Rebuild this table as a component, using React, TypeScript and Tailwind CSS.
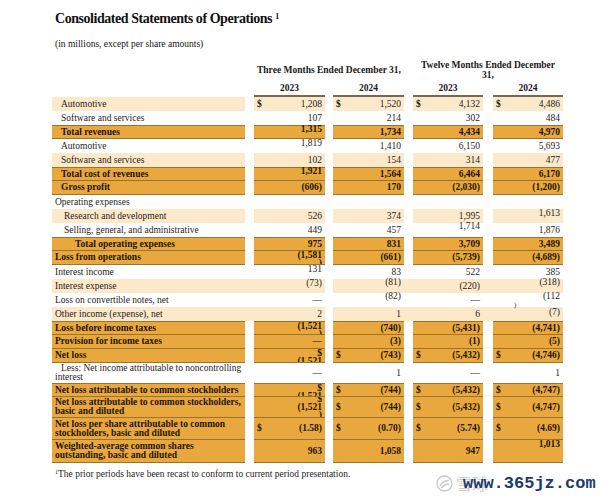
import React from "react";

type Cell = { t?: string; d?: boolean; c?: string; node?: React.ReactNode };
type Row = {
  label: React.ReactNode;
  lp: string;
  bg: "l" | "d" | "n";
  h: string;
  cells: Cell[];
  join?: boolean[];
  top?: boolean;
};

const serif = { fontFamily: '"Liberation Serif", "Times New Roman", serif' };

const Clip = ({ lines, lh, align }: { lines: string[]; lh: string; align: string }) => (
  <div className={`flex h-full w-full flex-col items-end overflow-hidden ${align} ${lh}`}>
    {lines.map((l, i) => (
      <span key={i} className="block shrink-0">
        {l}
      </span>
    ))}
  </div>
);

const rows: Row[] = [
  { label: "Automotive", lp: "pl-[9px]", bg: "l", h: "h-[14px]", cells: [{ d: true, t: "1,208" }, { d: true, t: "1,520" }, { d: true, t: "4,132" }, { d: true, t: "4,486" }] },
  { label: "Software and services", lp: "pl-[9px]", bg: "n", h: "h-[14px]", cells: [{ t: "107" }, { t: "214" }, { t: "302" }, { t: "484" }] },
  { label: "Total revenues", lp: "pl-[9px]", bg: "d", top: true, h: "h-[14px]", cells: [{ t: "1,315", c: "-translate-y-[3px]" }, { t: "1,734" }, { t: "4,434" }, { t: "4,970" }] },
  { label: "Automotive", lp: "pl-[9px]", bg: "n", h: "h-[14px]", cells: [{ t: "1,819", c: "-translate-y-[3px]" }, { t: "1,410" }, { t: "6,150" }, { t: "5,693" }] },
  { label: "Software and services", lp: "pl-[9px]", bg: "l", h: "h-[14px]", cells: [{ t: "102" }, { t: "154" }, { t: "314" }, { t: "477" }] },
  { label: "Total cost of revenues", lp: "pl-[9px]", bg: "d", top: true, h: "h-[14px]", cells: [{ t: "1,921", c: "-translate-y-[3px]" }, { t: "1,564" }, { t: "6,464" }, { t: "6,170" }] },
  { label: "Gross profit", lp: "pl-[9px]", bg: "d", h: "h-[14px]", cells: [{ t: "(606)" }, { t: "170" }, { t: "(2,030)" }, { t: "(1,200)" }] },
  { label: "Operating expenses", lp: "pl-[3px]", bg: "n", h: "h-[14px]", cells: [{}, {}, {}, {}] },
  { label: "Research and development", lp: "pl-[12px]", bg: "l", h: "h-[14px]", cells: [{ t: "526" }, { t: "374" }, { t: "1,995" }, { t: "1,613", c: "-translate-y-[3px]" }] },
  { label: "Selling, general, and administrative", lp: "pl-[12px]", bg: "n", h: "h-[14px]", cells: [{ t: "449" }, { t: "457" }, { t: "1,714", c: "-translate-y-[4px]" }, { t: "1,876" }] },
  { label: "Total operating expenses", lp: "pl-[23px]", bg: "d", top: true, h: "h-[14px]", cells: [{ t: "975" }, { t: "831" }, { t: "3,709" }, { t: "3,489" }] },
  { label: "Loss from operations", lp: "pl-[3px]", bg: "d", h: "h-[14px]", cells: [{ node: <Clip lines={["(1,581", ")"]} lh="leading-[8px]" align="justify-start pt-[0px]" /> }, { t: "(661)" }, { t: "(5,739)" }, { t: "(4,689)" }] },
  { label: "Interest income", lp: "pl-[3px]", bg: "n", h: "h-[14px]", cells: [{ t: "131", c: "-translate-y-[3px]" }, { t: "83" }, { t: "522" }, { t: "385" }] },
  { label: "Interest expense", lp: "pl-[3px]", bg: "l", h: "h-[14px]", join: [true, false, true, true], cells: [{ t: "(73)", c: "-translate-y-[3px]" }, { t: "(81)", c: "-translate-y-[4px]" }, { t: "(220)" }, { t: "(318)", c: "-translate-y-[4px]" }] },
  {
    label: "Loss on convertible notes, net", lp: "pl-[3px]", bg: "n", h: "h-[14px]",
    cells: [
      { t: "—" },
      { t: "(82)", c: "-translate-y-[4px]" },
      { t: "—" },
      {
        node: (
          <div className="relative h-full w-full">
            <span className="absolute right-0 top-[-2px]">(112</span>
            <span className="absolute left-[21px] top-[7px] text-[7px]">)</span>
          </div>
        ),
      },
    ],
  },
  { label: "Other income (expense), net", lp: "pl-[3px]", bg: "l", h: "h-[14px]", join: [true, false, true, true], cells: [{ t: "2" }, { t: "1" }, { t: "6" }, { t: "(7)", c: "-translate-y-[2px]" }] },
  { label: "Loss before income taxes", lp: "pl-[3px]", bg: "d", top: true, h: "h-[14px]", cells: [{ node: <Clip lines={["(1,521", ")"]} lh="leading-[8px]" align="justify-start pt-[0px]" /> }, { t: "(740)" }, { t: "(5,431)" }, { t: "(4,741)" }] },
  { label: "Provision for income taxes", lp: "pl-[3px]", bg: "d", h: "h-[14px]", cells: [{ t: "—" }, { t: "(3)" }, { t: "(1)" }, { t: "(5)" }] },
  { label: "Net loss", lp: "pl-[3px]", bg: "d", h: "h-[14px]", cells: [{ node: <Clip lines={["$", "(1,521"]} lh="leading-[8px]" align="justify-start" /> }, { d: true, t: "(743)" }, { d: true, t: "(5,432)" }, { d: true, t: "(4,746)" }] },
  {
    label: (
      <span className="block leading-[9px]">
        <span className="pl-[6px]">Less: Net income attributable to noncontrolling</span>
        <br />
        interest
      </span>
    ),
    lp: "pl-[3px]", bg: "n", h: "h-[20px]",
    cells: [{ t: "—" }, { t: "1" }, { t: "—" }, { t: "1" }],
  },
  { label: "Net loss attributable to common stockholders", lp: "pl-[3px]", bg: "d", top: true, h: "h-[14px]", cells: [{ node: <Clip lines={["$", "(1,521"]} lh="leading-[8px]" align="justify-start" /> }, { d: true, t: "(744)" }, { d: true, t: "(5,432)" }, { d: true, t: "(4,747)" }] },
  {
    label: (
      <span className="block leading-[9px]">
        Net loss attributable to common stockholders,
        <br />
        basic and diluted
      </span>
    ),
    lp: "pl-[3px]", bg: "d", h: "h-[21px]",
    cells: [{ node: <Clip lines={["$", "(1,521", ")"]} lh="leading-[8px]" align="justify-center" /> }, { d: true, t: "(744)" }, { d: true, t: "(5,432)" }, { d: true, t: "(4,747)" }],
  },
  {
    label: (
      <span className="block leading-[8.5px]">
        Net loss per share attributable to common
        <br />
        stockholders, basic and diluted
      </span>
    ),
    lp: "pl-[3px]", bg: "d", h: "h-[22px]",
    cells: [{ d: true, t: "(1.58)" }, { d: true, t: "(0.70)" }, { d: true, t: "(5.74)" }, { d: true, t: "(4.69)" }],
  },
  {
    label: (
      <span className="block leading-[9px]">
        Weighted-average common shares
        <br />
        outstanding, basic and diluted
      </span>
    ),
    lp: "pl-[3px]", bg: "d", h: "h-[23px]",
    cells: [{ t: "963" }, { t: "1,058" }, { t: "947" }, { t: "1,013", c: "-translate-y-[7px]" }],
  },
];

function bgClass(bg: "l" | "d" | "n", top?: boolean) {
  if (bg === "l") return "bg-[#FCE9C9]";
  if (bg === "d")
    return top
      ? "bg-[#E8A83E] border-y border-[#9A7331]"
      : "bg-[#E8A83E] border-b border-[#9A7331]";
  return "";
}

function TableRow({ r }: { r: Row }) {
  const bold = r.bg === "d";
  const cellBg = bgClass(r.bg, r.top);
  const join = r.join ?? [false, false, false, false];
  const spacerW = ["w-[9px]", "w-[8px]", "w-[9px]", "w-[10px]"];
  const colW = ["w-[71px]", "w-[71px]", "w-[70px]", "w-[70px]"];
  const parts: React.ReactNode[] = [];
  parts.push(
    <div key="lab" className={`box-border flex w-[193px] shrink-0 items-center ${r.lp} ${cellBg} ${bold ? "font-bold text-[#1f1505]" : "text-[#1e1e1e]"}`}>
      {r.label}
    </div>
  );
  r.cells.forEach((c, i) => {
    parts.push(
      <div key={`s${i}`} className={`box-border shrink-0 ${spacerW[i]} ${join[i] ? cellBg : ""}`} />
    );
    parts.push(
      <div key={`c${i}`} className={`box-border shrink-0 ${colW[i]} ${cellBg} ${bold ? "font-bold text-[#1f1505]" : "text-[#1e1e1e]"}`}>
        {c.node ? (
          <div className="h-full w-full pr-[3px]">{c.node}</div>
        ) : (
          <div className="flex h-full items-center justify-between px-[3px]">
            <span className="font-bold">{c.d ? "$" : ""}</span>
            <span className={c.c ?? ""}>{c.t ?? ""}</span>
          </div>
        )}
      </div>
    );
  });
  return <div className={`flex ${r.h} text-[9.5px] leading-[11px]`}>{parts}</div>;
}

export default function App() {
  return (
    <div className="relative h-[500px] w-[601px] overflow-hidden bg-white text-[#1a1a1a]" style={serif}>
      <div className="pl-[55px] pt-[11px]">
        <div className="h-[16px] text-[14px] font-bold leading-[16px] tracking-[-0.45px] text-[#111]">
          Consolidated Statements of Operations <sup className="text-[8px] font-bold tracking-normal">1</sup>
        </div>
        <div className="mt-[12px] h-[11px] text-[9.5px] leading-[11px] text-[#151515]">
          (in millions, except per share amounts)
        </div>
      </div>
      <div className="pl-[52px]">
        <div className="mt-[10px] flex h-[20px] text-[9.5px] font-bold leading-[10px] text-[#1a1a1a]">
          <div className="w-[202px] shrink-0" />
          <div className="flex w-[150px] shrink-0 items-center justify-center">Three Months Ended December 31,</div>
          <div className="w-[9px] shrink-0" />
          <div className="flex w-[150px] shrink-0 flex-col items-center justify-center text-center">
            <span>Twelve Months Ended December</span>
            <span>31,</span>
          </div>
        </div>
        <div className="mt-[2px] flex h-[15px] text-[9.5px] font-bold text-[#1a1a1a]">
          <div className="w-[202px] shrink-0" />
          <div className="box-border flex w-[71px] shrink-0 items-center justify-center border-b-[2px] border-[#756955]">2023</div>
          <div className="w-[8px] shrink-0" />
          <div className="box-border flex w-[71px] shrink-0 items-center justify-center border-b-[2px] border-[#756955]">2024</div>
          <div className="w-[9px] shrink-0" />
          <div className="box-border flex w-[70px] shrink-0 items-center justify-center border-b-[2px] border-[#756955]">2023</div>
          <div className="w-[10px] shrink-0" />
          <div className="box-border flex w-[70px] shrink-0 items-center justify-center border-b-[2px] border-[#756955]">2024</div>
        </div>
        {rows.map((r, i) => (
          <TableRow key={i} r={r} />
        ))}
        <div className="mt-[6px] pl-[3px] text-[9.5px] leading-[11px] text-[#1e1e1e]">
          <sup className="text-[6px]">1</sup>The prior periods have been recast to conform to current period presentation.
        </div>
      </div>

      <div className="pointer-events-none absolute left-[436px] top-[474px] flex items-center">
        <svg width="17" height="17" viewBox="0 0 17 17" className="shrink-0">
          <circle cx="8.5" cy="8.5" r="7.5" fill="none" stroke="#c9c9c9" strokeWidth="1.3" />
          <path d="M4 11 C6 7, 9 6, 13 5" fill="none" stroke="#c9c9c9" strokeWidth="1.3" />
          <path d="M5 13 C8 10, 11 9, 13 9" fill="none" stroke="#c9c9c9" strokeWidth="1.3" />
        </svg>
        <span className="ml-[3px] text-[16px] leading-[18px] text-[#cdcdcd]" style={{ fontFamily: '"Noto Sans CJK SC", sans-serif' }}>
          雪球
        </span>
      </div>
      <div
        className="pointer-events-none absolute left-[463px] top-[474px] text-[17px] font-bold leading-[20px] text-[#1d3a70]"
        style={{ fontFamily: '"Liberation Mono", "Courier New", monospace' }}
      >
        www.365jz.com
      </div>
    </div>
  );
}
